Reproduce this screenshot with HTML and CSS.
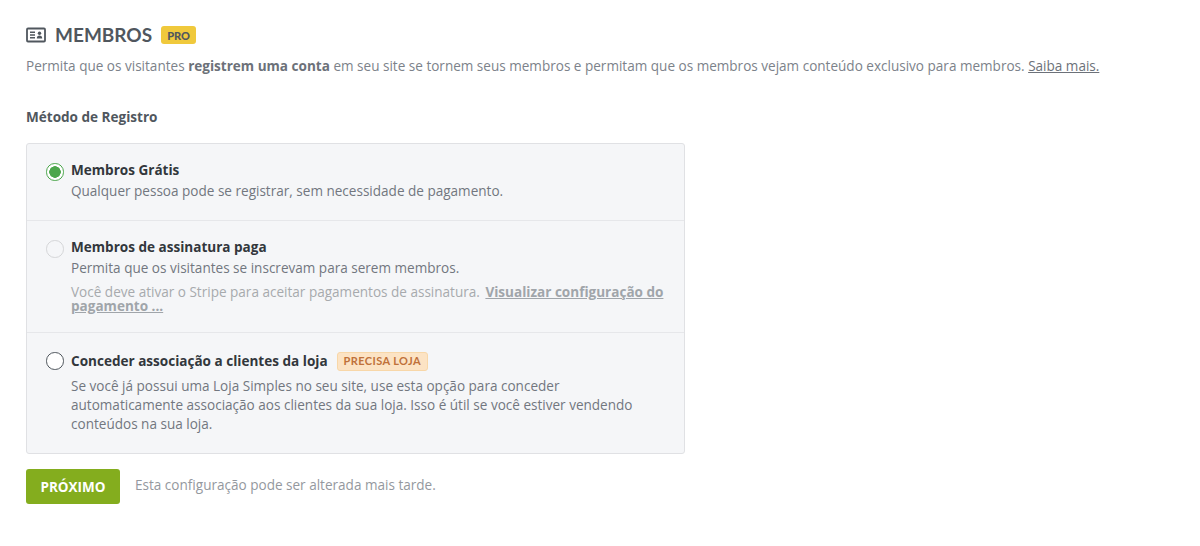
FILE: index.html
```html
<!DOCTYPE html>
<html lang="pt">
<head>
<meta charset="utf-8">
<title>Membros</title>
<link rel="stylesheet" href="styles.css">
</head>
<body>
<main class="page">
  <header class="title-row">
    <svg class="title-icon" width="20" height="16" viewBox="0 0 20 16" aria-hidden="true">
      <rect x="1" y="1.5" width="18" height="13" rx="1" fill="none" stroke="#50575e" stroke-width="1.8"/>
      <path d="M4 5.2h5M4 8h5M4 10.8h5" stroke="#50575e" stroke-width="1.4" fill="none"/>
      <circle cx="13.5" cy="6.3" r="1.7" fill="#50575e"/>
      <path d="M10.8 11.4c0-2 1.2-2.9 2.7-2.9s2.7.9 2.7 2.9z" fill="#50575e"/>
    </svg>
    <h1 class="title">MEMBROS</h1>
    <span class="pro-badge">PRO</span>
  </header>
  <p class="intro">Permita que os visitantes <strong>registrem uma conta</strong> em seu site se tornem seus membros e permitam que os membros vejam conteúdo exclusivo para membros. <a class="intro-link" href="#">Saiba mais.</a></p>
  <h2 class="section-label">Método de Registro</h2>
  <section class="options">
    <div class="option option-free">
      <span class="radio radio-checked"></span>
      <div class="option-body">
        <div class="option-title">Membros Grátis</div>
        <div class="option-text">Qualquer pessoa pode se registrar, sem necessidade de pagamento.</div>
      </div>
    </div>
    <div class="option option-paid">
      <span class="radio radio-disabled"></span>
      <div class="option-body">
        <div class="option-title">Membros de assinatura paga</div>
        <div class="option-text">Permita que os visitantes se inscrevam para serem membros.</div>
        <div class="option-note">Você deve ativar o Stripe para aceitar pagamentos de assinatura. <a class="note-link" href="#">Visualizar configuração do pagamento ...</a></div>
      </div>
    </div>
    <div class="option option-store">
      <span class="radio radio-store"></span>
      <div class="option-body">
        <div class="option-title">Conceder associação a clientes da loja <span class="store-badge">PRECISA LOJA</span></div>
        <div class="option-text option-text-long">Se você já possui uma Loja Simples no seu site, use esta opção para conceder automaticamente associação aos clientes da sua loja. Isso é útil se você estiver vendendo conteúdos na sua loja.</div>
      </div>
    </div>
  </section>
  <footer class="actions">
    <button class="next-button" type="button">PRÓXIMO</button>
    <span class="actions-note">Esta configuração pode ser alterada mais tarde.</span>
  </footer>
</main>
</body>
</html>
```
FILE: styles.css
```css
* { box-sizing: border-box; }
html, body { margin: 0; background: #fff; }
body {
  width: 1200px;
  height: 546px;
  overflow: hidden;
  font-family: "Open Sans", "Noto Sans", sans-serif;
  font-size: 13.55px;
  color: #646970;
}
.page { padding: 24px 26px 0; }
.title-row { display: flex; align-items: center; height: 22px; }
.title-icon { margin-right: 9px; flex: none; }
.title {
  margin: 0 9px 0 0;
  font-family: "Lato", sans-serif;
  font-size: 19px;
  font-weight: 700;
  line-height: 22px;
  color: #50575e;
}
.pro-badge {
  display: inline-flex;
  align-items: center;
  height: 18px;
  padding: 0 6px;
  border-radius: 3px;
  background: #f0c93c;
  font-family: "Lato", sans-serif;
  font-size: 11px;
  font-weight: 900;
  color: #50575e;
}
.intro { margin: 10px 0 0; line-height: 21px; white-space: nowrap; color: #7c828a; }
.intro strong { color: #6c7179; }
.intro-link { color: #6c7179; }
.section-label { margin: 30px 0 0; font-size: 13.55px; line-height: 21px; font-weight: 700; color: #50575e; }
.options {
  width: 659px;
  margin-top: 15px;
  border: 1px solid #e0e1e4;
  border-radius: 3px;
  background: #f5f6f8;
}
.option { display: flex; padding: 16px 16px 0 19px; }
.option + .option { border-top: 1px solid #e6e7ea; }
.option-free { height: 76px; }
.option-paid { height: 112px; }
.option-store { height: 121px; padding-top: 18px; }
.radio {
  flex: none;
  width: 17.5px;
  height: 17.5px;
  margin: 3px 7.5px 0 0;
  border: 1.5px solid #50575e;
  border-radius: 50%;
  background: #fff;
}
.radio-checked { border: 1px solid #4ca64c; background: radial-gradient(circle, #4ca64c 0 5.5px, #fff 6px); }
.radio-disabled { border-color: #d5d6d8; background: #f5f6f8; }
.radio-store { margin-top: 1px; }
.option-title { display: flex; align-items: center; font-weight: 700; line-height: 20px; color: #32373c; }
.option-text { margin-top: 2px; line-height: 19px; color: #72777f; }
.option-text-long { margin-top: 6px; }
.option-note { margin-top: 7px; line-height: 14px; color: #a7aaad; }
.note-link { margin-left: 2px; font-weight: 700; color: #a0a5aa; }
.store-badge {
  display: inline-flex;
  align-items: center;
  height: 19px;
  margin-left: 9px;
  padding: 0 6px;
  border: 1px solid #f8d7a8;
  border-radius: 3px;
  background: #fce3c4;
  font-family: "Lato", sans-serif;
  font-size: 11px;
  font-weight: 700;
  letter-spacing: .4px;
  color: #c0713a;
}
.actions { display: flex; align-items: center; gap: 15px; margin-top: 15px; }
.next-button {
  width: 94px;
  height: 35px;
  padding: 0;
  border: 0;
  border-radius: 3px;
  background: #84ad1e;
  font-family: "Open Sans", sans-serif;
  font-size: 13.5px;
  font-weight: 700;
  color: #fff;
}
.actions-note { padding-bottom: 3px; color: #94989e; }
```
